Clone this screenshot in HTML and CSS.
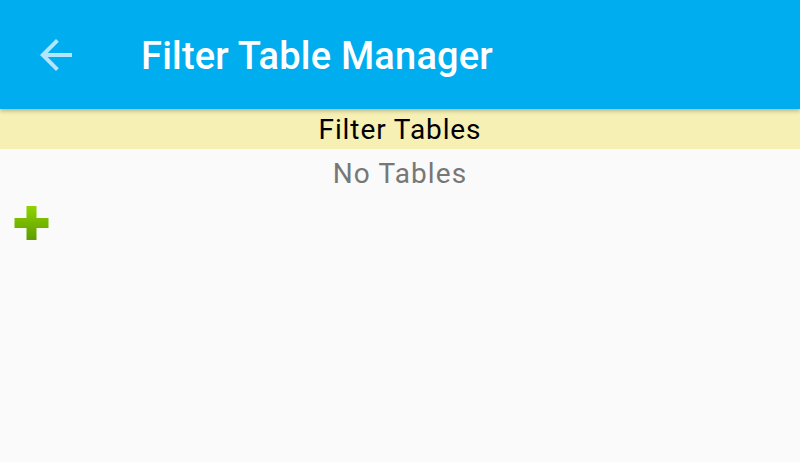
FILE: index.html
```html
<!DOCTYPE html>
<html>
<head>
<meta charset="utf-8">
<link rel="stylesheet" href="styles.css">
</head>
<body>
<header class="appbar">
  <span class="back">
    <svg width="48" height="48" viewBox="0 0 24 24"><path d="M20 11H7.83l5.59-5.59L12 4l-8 8 8 8 1.41-1.41L7.83 13H20v-2z" fill="#b3e5fc"/></svg>
  </span>
  <h1 class="title">Filter Table Manager</h1>
</header>
<div class="section">Filter Tables</div>
<div class="empty">No Tables</div>
<div class="add">
  <svg width="36" height="36" viewBox="0 0 36 36">
    <defs>
      <linearGradient id="g" x1="0" y1="0" x2="0" y2="1">
        <stop offset="0" stop-color="#8fd400"/>
        <stop offset="1" stop-color="#5c9c00"/>
      </linearGradient>
    </defs>
    <path d="M12.5 1h10v12h12v10h-12v12h-10V23H0.5V13h12z" fill="url(#g)"/>
  </svg>
</div>
</body>
</html>
```
FILE: styles.css
```css
html, body {
  margin: 0;
  padding: 0;
  background: #fafafa;
  font-family: Roboto, "Noto Sans", sans-serif;
  width: 800px;
  height: 462px;
  overflow: hidden;
}
.appbar {
  height: 109px;
  background: #00adee;
  display: flex;
  align-items: center;
  padding-left: 32px;
  box-shadow: 0 2px 4px rgba(0,0,0,0.25);
  position: relative;
  z-index: 1;
}
.back {
  width: 48px;
  height: 48px;
  display: flex;
}
.title {
  margin: 2px 0 0 61px;
  color: #fff;
  font-size: 38px;
  font-weight: 500;
  letter-spacing: 0.2px;
}
.section {
  height: 40px;
  background: #f6f0b5;
  display: flex;
  align-items: center;
  justify-content: center;
  font-size: 28px;
  letter-spacing: 0.9px;
  color: #000;
}
.empty {
  height: 48px;
  display: flex;
  align-items: center;
  justify-content: center;
  font-size: 28px;
  letter-spacing: 1.1px;
  color: #777;
}
.add {
  padding-left: 14px;
  padding-top: 8px;
  display: flex;
}
```
